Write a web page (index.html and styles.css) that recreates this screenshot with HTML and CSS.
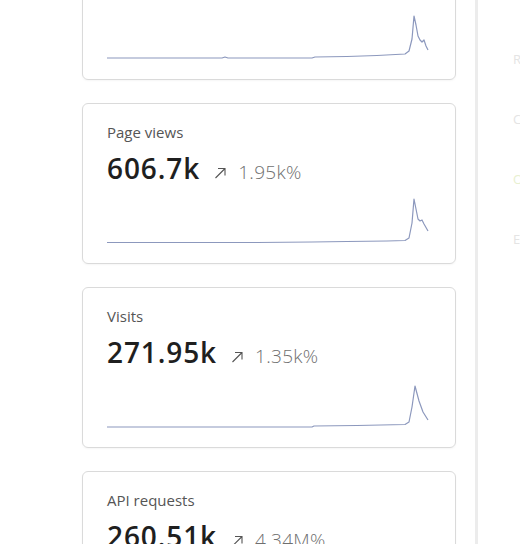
FILE: index.html
```html
<!DOCTYPE html>
<html lang="en">
<head>
    <meta charset="UTF-8">
    <meta name="viewport" content="width=device-width, initial-scale=1.0">
    <title>Analytics</title>
    <link rel="stylesheet" href="styles.css">
</head>
<body>
    <main id="metrics">
        <div class="card">
            <div class="label">Requests</div>
            <div class="valueRow">
                <span class="value">1.28M</span>
                <svg class="arrow" viewBox="0 0 13 12"><path d="M1.5 11 L11 1.5 M4 1.5 H11 V8.5"/></svg>
                <span class="change">2.1k%</span>
            </div>
            <svg class="spark" viewBox="0 0 322 56" preserveAspectRatio="none">
                <path d="M0 49 L115 49 L118 48 L121 49 L205 49 L208 48 L240 47.5 L270 46.5 L298 45 L302 42 L305 30 L307 7 L309 16 L311 27 L313 31 L315 33 L317 31 L319 37 L321 41"/>
            </svg>
        </div>

        <div class="card">
            <div class="label">Page views</div>
            <div class="valueRow">
                <span class="value">606.7k</span>
                <svg class="arrow" viewBox="0 0 13 12"><path d="M1.5 11 L11 1.5 M4 1.5 H11 V8.5"/></svg>
                <span class="change">1.95k%</span>
            </div>
            <svg class="spark" viewBox="0 0 322 56" preserveAspectRatio="none">
                <path d="M0 49.5 L150 49.5 L205 49 L240 48.5 L280 48 L298 47.5 L302 45 L305 30 L307 6 L309 16 L311 26 L313 28 L315 27 L317 31 L321 38"/>
            </svg>
        </div>

        <div class="card">
            <div class="label">Visits</div>
            <div class="valueRow">
                <span class="value">271.95k</span>
                <svg class="arrow" viewBox="0 0 13 12"><path d="M1.5 11 L11 1.5 M4 1.5 H11 V8.5"/></svg>
                <span class="change">1.35k%</span>
            </div>
            <svg class="spark" viewBox="0 0 322 56" preserveAspectRatio="none">
                <path d="M0 50 L205 50 L207 49 L250 48.5 L298 47.5 L302 45 L305 30 L308 9 L312 24 L316 35 L321 43"/>
            </svg>
        </div>

        <div class="card">
            <div class="label">API requests</div>
            <div class="valueRow">
                <span class="value">260.51k</span>
                <svg class="arrow" viewBox="0 0 13 12"><path d="M1.5 11 L11 1.5 M4 1.5 H11 V8.5"/></svg>
                <span class="change">4.34M%</span>
            </div>
            <svg class="spark" viewBox="0 0 322 56" preserveAspectRatio="none">
                <path d="M0 50 L240 50 L298 49 L302 46 L305 30 L308 8 L312 26 L321 42"/>
            </svg>
        </div>
    </main>

    <aside id="sidePanel">
        <div class="sideLine">Re</div>
        <div class="sideLine">Ca</div>
        <div class="sideLine accent">Ok</div>
        <div class="sideLine">Er</div>
    </aside>
</body>
</html>
```

FILE: styles.css
```css
body {
    margin: 0;
    background: #ffffff;
    font-family: 'Open Sans', 'Noto Sans', sans-serif;
    color: #222222;
    display: flex;
    height: 544px;
    overflow: hidden;
}

#metrics {
    width: 374px;
    padding: 0 19px 0 82px;
    margin-top: -81px;
    display: flex;
    flex-direction: column;
    gap: 23px;
    flex-shrink: 0;
}

.card {
    border: 1px solid #dadada;
    border-radius: 6px;
    padding: 18px 24px 14px;
    height: 128px;
    box-shadow: 0 1px 2px rgba(0, 0, 0, 0.04);
}

.label {
    font-size: 15px;
    line-height: 20px;
    color: #555555;
}

.valueRow {
    display: flex;
    align-items: baseline;
    margin-top: 8px;
    height: 38px;
}

.value {
    font-size: 28px;
    line-height: 36px;
    font-weight: 600;
    color: #1f1f1f;
    letter-spacing: 0.9px;
}

.arrow {
    width: 13px;
    height: 12px;
    margin-left: 14px;
    margin-right: 11px;
    fill: none;
    stroke: #555555;
    stroke-width: 1.1;
}

.change {
    font-size: 19px;
    font-weight: 300;
    color: #6f6f6f;
    letter-spacing: 0.3px;
}

.spark {
    display: block;
    width: 322px;
    height: 56px;
    margin-top: 5px;
}

.spark path {
    fill: none;
    stroke: #8c98bd;
    stroke-width: 1.2;
    stroke-linejoin: round;
}

#sidePanel {
    border-left: 3px solid #ececec;
    flex: 1;
    padding: 50px 0 0 35px;
    overflow: hidden;
}

.sideLine {
    font-size: 13px;
    color: #e4e4e4;
    margin-bottom: 42px;
    white-space: nowrap;
}

.sideLine.accent {
    color: #e8f0d0;
}
```
